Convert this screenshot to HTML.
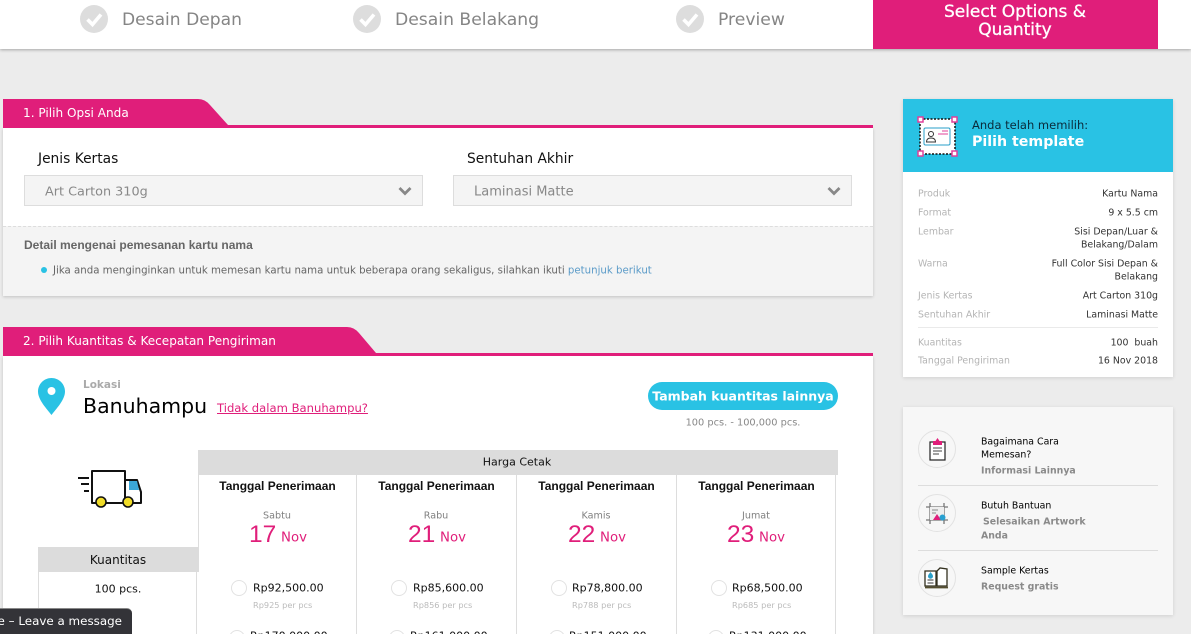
<!DOCTYPE html>
<html style="overflow:hidden;height:634px"><head><meta charset="utf-8"><style>
html,body{margin:0;padding:0}
body{width:1191px;height:634px;overflow:hidden;background:#ececec;font-family:"DejaVu Sans","Liberation Sans",sans-serif;color:#222}
#w{position:relative;width:1191px;height:634px;overflow:hidden;background:#ececec}
.b{position:absolute}
.t{position:absolute;white-space:nowrap;transform:translateY(-50%)}
.c{position:absolute;white-space:nowrap;transform:translate(-50%,-50%)}
.ar{font-family:"Liberation Sans",sans-serif;font-weight:bold}
.l{font-size:9.4px;color:#b4b4b4;left:918px}
.v{font-size:9.4px;color:#333;right:33px;text-align:right}
.day{font-size:9.6px;color:#808080}
.num{font-size:24.5px;color:#e01e7a;font-family:"Liberation Sans",sans-serif}
.mon{font-size:13.3px;color:#e01e7a}
.h{font-family:"Liberation Sans",sans-serif;font-weight:bold;font-size:12px;color:#111}
.p{font-size:11px;color:#111}
.s{font-size:8.2px;color:#bbb}
.r{position:absolute;width:14px;height:14px;border:1px solid #e2e2e2;border-radius:50%;background:#fff}
.ln{position:absolute;width:1px;background:#ddd}
.hc{font-size:9.4px;color:#000}
.hg{font-size:9.4px;color:#8a8a8a;font-weight:bold}
.circ{position:absolute;left:918px;width:36px;height:36px;border:1px solid #e2e2e2;border-radius:50%}
</style></head><body><div id="w">

<!-- header -->
<div class="b" style="left:0;top:0;width:1191px;height:49px;background:#fff;box-shadow:0 1px 3px rgba(0,0,0,.3)"></div>
<div class="b" style="left:873px;top:0;width:285px;height:49px;background:#e01e7a"></div>
<svg class="b" style="left:80px;top:5px" width="28" height="28"><circle cx="14" cy="14" r="14" fill="#ddd"/><path d="M7.500 14.500l5 5 8.500-10" fill="none" stroke="#fff" stroke-width="3.600"/></svg>
<svg class="b" style="left:353px;top:5px" width="28" height="28"><circle cx="14" cy="14" r="14" fill="#ddd"/><path d="M7.500 14.500l5 5 8.500-10" fill="none" stroke="#fff" stroke-width="3.600"/></svg>
<svg class="b" style="left:676px;top:5px" width="28" height="28"><circle cx="14" cy="14" r="14" fill="#ddd"/><path d="M7.500 14.500l5 5 8.500-10" fill="none" stroke="#fff" stroke-width="3.600"/></svg>
<div class="t" style="left:122px;top:20px;font-size:17.100px;color:#858585">Desain Depan</div>
<div class="t" style="left:395px;top:20px;font-size:17.200px;color:#858585">Desain Belakang</div>
<div class="t" style="left:718px;top:20px;font-size:17.200px;color:#858585">Preview</div>
<div class="c" style="left:1015px;top:12px;font-size:17px;color:#fff;-webkit-text-stroke:.3px #fff">Select Options &amp;</div>
<div class="c" style="left:1015px;top:30px;font-size:17px;color:#fff;-webkit-text-stroke:.3px #fff">Quantity</div>

<!-- section 1 -->
<div class="b" style="left:3px;top:128px;width:870px;height:168px;background:#fff;box-shadow:0 1px 3px rgba(0,0,0,.18)"></div>
<svg class="b" style="left:3px;top:99px" width="870" height="29"><path d="M0 0H195Q202 0 207 6L225 26H870V29H0Z" fill="#e01e7a"/></svg>
<div class="t" style="left:23px;top:113px;font-size:12.100px;color:#fff">1. Pilih Opsi Anda</div>
<div class="t" style="left:38px;top:159px;font-size:13.800px;color:#111">Jenis Kertas</div>
<div class="t" style="left:467px;top:159px;font-size:13.800px;color:#111">Sentuhan Akhir</div>
<div class="b" style="left:24px;top:175px;width:397px;height:29px;background:#f4f4f4;border:1px solid #ddd"></div>
<div class="b" style="left:453px;top:175px;width:397px;height:29px;background:#f4f4f4;border:1px solid #ddd"></div>
<div class="t" style="left:45px;top:192px;font-size:12.800px;color:#888">Art Carton 310g</div>
<div class="t" style="left:474px;top:192px;font-size:13px;color:#888">Laminasi Matte</div>
<svg class="b" style="left:398px;top:186px" width="14" height="10"><path d="M1.500 2l5.500 5.500L12.500 2" fill="none" stroke="#888" stroke-width="2.800"/></svg>
<svg class="b" style="left:827px;top:186px" width="14" height="10"><path d="M1.500 2l5.500 5.500L12.500 2" fill="none" stroke="#888" stroke-width="2.800"/></svg>
<div class="b" style="left:3px;top:226px;width:870px;height:70px;background:#f4f4f4;border-top:1px dashed #ddd;box-sizing:border-box"></div>
<div class="t ar" style="left:24px;top:245px;font-size:12px;color:#666">Detail mengenai pemesanan kartu nama</div>
<div class="b" style="left:41px;top:267px;width:6px;height:6px;border-radius:50%;background:#29c2e4"></div>
<div class="t" style="left:53px;top:271px;font-size:10.200px;color:#666">Jika anda menginginkan untuk memesan kartu nama untuk beberapa orang sekaligus, silahkan ikuti <span style="color:#5b9bc8">petunjuk berikut</span></div>

<!-- section 2 -->
<div class="b" style="left:3px;top:356px;width:870px;height:278px;background:#fff;box-shadow:0 1px 3px rgba(0,0,0,.18)"></div>
<svg class="b" style="left:3px;top:327px" width="870" height="29"><path d="M0 0H344Q351 0 356 6L373 26H870V29H0Z" fill="#e01e7a"/></svg>
<div class="t" style="left:23px;top:340.500px;font-size:12.070px;color:#fff">2. Pilih Kuantitas &amp; Kecepatan Pengiriman</div>

<svg class="b" style="left:38px;top:378px" width="27" height="38"><path d="M13.500 0C6 0 0 6 0 13.500 0 22 9 31 13.500 37 18 31 27 22 27 13.500 27 6 21 0 13.500 0Z" fill="#29c2e4"/><circle cx="13.500" cy="13" r="4" fill="#fff"/></svg>
<div class="t" style="left:83px;top:385px;font-size:10.500px;font-weight:bold;color:#aaa">Lokasi</div>
<div class="t" style="left:83px;top:406px;font-size:20.500px;color:#000">Banuhampu</div>
<div class="t" style="left:217px;top:408px;font-size:11.600px;color:#e01e7a;text-decoration:underline">Tidak dalam Banuhampu?</div>
<div class="b" style="left:648px;top:382px;width:190px;height:28px;border-radius:14px;background:#29c2e4"></div>
<div class="c" style="left:743px;top:396px;font-size:12.500px;font-weight:bold;color:#fff">Tambah kuantitas lainnya</div>
<div class="c" style="left:743px;top:423px;font-size:9.800px;color:#888">100 pcs. - 100,000 pcs.</div>

<!-- truck -->
<svg class="b" style="left:76px;top:468px" width="68" height="42">
<path d="M2 10h11M5 16h8M8 23h5" stroke="#111" stroke-width="2" fill="none"/>
<path d="M16 3h33v32H16Z" fill="#fff" stroke="#111" stroke-width="2" stroke-linejoin="round"/>
<path d="M49 12h12l4 12v11H49Z" fill="#fff" stroke="#111" stroke-width="2" stroke-linejoin="round"/>
<path d="M53 13h8l2 9H53Z" fill="#3ba7d8"/>
<circle cx="25" cy="34" r="5" fill="#f0dc28" stroke="#111" stroke-width="1.600"/>
<circle cx="52" cy="34" r="5" fill="#f0dc28" stroke="#111" stroke-width="1.600"/>
</svg>

<!-- table -->
<div class="b" style="left:198px;top:450px;width:640px;height:25px;background:#dcdcdc"></div>
<div class="c" style="left:517px;top:462px;font-size:11px;color:#111">Harga Cetak</div>
<div class="b" style="left:38px;top:547px;width:161px;height:25px;background:#dcdcdc"></div>
<div class="c" style="left:118px;top:560px;font-size:12px;color:#111">Kuantitas</div>
<div class="ln" style="left:38px;top:572px;height:62px"></div>
<div class="ln" style="left:198px;top:475px;height:72px"></div>
<div class="ln" style="left:196px;top:572px;height:62px"></div>
<div class="ln" style="left:356px;top:475px;height:159px"></div>
<div class="ln" style="left:516px;top:475px;height:159px"></div>
<div class="ln" style="left:676px;top:475px;height:159px"></div>
<div class="ln" style="left:835px;top:475px;height:159px"></div>
<div class="c" style="left:118px;top:589px;font-size:11px;color:#111">100 pcs.</div>

<div class="c h" style="left:277.500px;top:485.500px">Tanggal Penerimaan</div>
<div class="c h" style="left:436.500px;top:485.500px">Tanggal Penerimaan</div>
<div class="c h" style="left:596.500px;top:485.500px">Tanggal Penerimaan</div>
<div class="c h" style="left:756.500px;top:485.500px">Tanggal Penerimaan</div>

<div class="c day" style="left:277px;top:516px">Sabtu</div>
<div class="c day" style="left:436px;top:516px">Rabu</div>
<div class="c day" style="left:596px;top:516px">Kamis</div>
<div class="c day" style="left:756px;top:516px">Jumat</div>

<div class="t num" style="left:249px;top:535px">17</div><div class="t mon" style="left:281px;top:538px">Nov</div>
<div class="t num" style="left:408px;top:535px">21</div><div class="t mon" style="left:440px;top:538px">Nov</div>
<div class="t num" style="left:568px;top:535px">22</div><div class="t mon" style="left:600px;top:538px">Nov</div>
<div class="t num" style="left:727px;top:535px">23</div><div class="t mon" style="left:759px;top:538px">Nov</div>

<div class="r" style="left:231px;top:580px"></div><div class="t p" style="left:253px;top:588px">Rp92,500.00</div><div class="t s" style="left:253px;top:605px">Rp925 per pcs</div>
<div class="r" style="left:391px;top:580px"></div><div class="t p" style="left:413px;top:588px">Rp85,600.00</div><div class="t s" style="left:413px;top:605px">Rp856 per pcs</div>
<div class="r" style="left:551px;top:580px"></div><div class="t p" style="left:572px;top:588px">Rp78,800.00</div><div class="t s" style="left:572px;top:605px">Rp788 per pcs</div>
<div class="r" style="left:711px;top:580px"></div><div class="t p" style="left:732px;top:588px">Rp68,500.00</div><div class="t s" style="left:732px;top:605px">Rp685 per pcs</div>

<div class="r" style="left:229px;top:630px"></div><div class="t p" style="left:250px;top:636px">Rp170,000.00</div>
<div class="r" style="left:389px;top:630px"></div><div class="t p" style="left:410px;top:636px">Rp161,000.00</div>
<div class="r" style="left:549px;top:630px"></div><div class="t p" style="left:569px;top:636px">Rp151,000.00</div>
<div class="r" style="left:708px;top:630px"></div><div class="t p" style="left:729px;top:636px">Rp131,000.00</div>

<!-- chat -->
<div class="b" style="left:0;top:608px;width:132px;height:26px;background:#333338;border-top:1px solid #888;box-sizing:border-box;border-radius:0 5px 0 0;overflow:hidden">
<div style="position:absolute;right:10px;top:5px;font-size:11.900px;color:#fff;white-space:nowrap">e – Leave a message</div></div>

<!-- right card -->
<div class="b" style="left:903px;top:99px;width:270px;height:278px;background:#fff;box-shadow:0 1px 4px rgba(0,0,0,.12)"></div>
<div class="b" style="left:903px;top:99px;width:270px;height:73px;background:#29c2e4"></div>
<svg class="b" style="left:917px;top:116px" width="42" height="42">
<rect x="3" y="3" width="35" height="35" fill="#fff" stroke="#111" stroke-width="1.500" stroke-dasharray="2 1.500"/>
<g fill="#fff" stroke="#e0409a" stroke-width="1.500"><rect x="1" y="1" width="5" height="5"/><rect x="35" y="1" width="5" height="5"/><rect x="1" y="35" width="5" height="5"/><rect x="35" y="35" width="5" height="5"/></g>
<rect x="7" y="12" width="26" height="17" rx="1.500" fill="#fff" stroke="#2a9fc8" stroke-width="1"/>
<circle cx="14" cy="18" r="2.500" fill="none" stroke="#333" stroke-width="1"/><path d="M9.500 26c0-3 2-4 4.500-4s4.500 1 4.500 4Z" fill="none" stroke="#333" stroke-width="1"/>
<path d="M25 15h6M21 18h10" stroke="#e0409a" stroke-width="1"/>
</svg>
<div class="t" style="left:972px;top:125px;font-size:11.500px;color:#0a2a3a">Anda telah memilih:</div>
<div class="t" style="left:972px;top:141.500px;font-size:14.200px;font-weight:bold;color:#fff">Pilih template</div>
<div class="t l" style="top:194px">Produk</div><div class="t v" style="top:194px">Kartu Nama</div>
<div class="t l" style="top:213px">Format</div><div class="t v" style="top:213px">9 x 5.5 cm</div>
<div class="t l" style="top:232px">Lembar</div><div class="t v" style="top:232px">Sisi Depan/Luar &amp;</div><div class="t v" style="top:245px">Belakang/Dalam</div>
<div class="t l" style="top:264px">Warna</div><div class="t v" style="top:264px">Full Color Sisi Depan &amp;</div><div class="t v" style="top:277px">Belakang</div>
<div class="t l" style="top:296px">Jenis Kertas</div><div class="t v" style="top:296px">Art Carton 310g</div>
<div class="t l" style="top:315px">Sentuhan Akhir</div><div class="t v" style="top:315px">Laminasi Matte</div>
<div class="b" style="left:918px;top:327px;width:240px;height:1px;background:#eaeaea"></div>
<div class="t l" style="top:343px">Kuantitas</div><div class="t v" style="top:343px">100&nbsp; buah</div>
<div class="t l" style="top:361px">Tanggal Pengiriman</div><div class="t v" style="top:361px">16 Nov 2018</div>

<!-- help card -->
<div class="b" style="left:903px;top:407px;width:270px;height:208px;background:#f7f7f7;box-shadow:0 1px 4px rgba(0,0,0,.12)"></div>
<div class="circ" style="top:430px"></div><div class="circ" style="top:494px"></div><div class="circ" style="top:559px"></div>
<div class="b" style="left:918px;top:485px;width:240px;height:1px;background:#ddd"></div>
<div class="b" style="left:918px;top:550px;width:240px;height:1px;background:#ddd"></div>
<svg class="b" style="left:925px;top:437px" width="24" height="24"><rect x="5" y="5" width="15" height="18" fill="#fff" stroke="#222" stroke-width="1.200"/><path d="M8 4h9v4H8ZM10.500 4l2-3 2 3" fill="#e01e7a"/><path d="M8 11h9M8 14h9M8 17h6" stroke="#444" stroke-width="1"/></svg>
<svg class="b" style="left:925px;top:501px" width="24" height="24"><path d="M5 2v21M19 2v21M1 6h22M1 19h22" stroke="#777" stroke-width="1.300" fill="none"/><rect x="5" y="6" width="14" height="13" fill="#eee"/><path d="M7 9h6M7 12h4" stroke="#888" stroke-width="1"/><path d="M8 19l4-6 4 6Z" fill="#e01e7a"/><circle cx="17.500" cy="16.500" r="3" fill="#29a0d0"/></svg>
<svg class="b" style="left:924px;top:566px" width="26" height="24"><path d="M1 5h11v15H1ZM13 20V5l3-3 7 1v17Z" fill="#fff" stroke="#33301f" stroke-width="1.300"/><path d="M1 21.500h23" stroke="#554f30" stroke-width="1.800"/><path d="M6.500 6c-1.500 2-2.500 3-2.500 4.200a2.500 2.500 0 0 0 5 0C9 9 8 8 6.500 6Z" fill="#2a9fc8"/><path d="M3.500 14h6M3.500 17h6" stroke="#333" stroke-width="1"/></svg>

<div class="t hc" style="left:981px;top:442px">Bagaimana Cara</div>
<div class="t hc" style="left:981px;top:455px">Memesan?</div>
<div class="t hg" style="left:981px;top:471px">Informasi Lainnya</div>
<div class="t hc" style="left:981px;top:506px">Butuh Bantuan</div>
<div class="t hg" style="left:983px;top:522px">Selesaikan Artwork</div>
<div class="t hg" style="left:981px;top:536px">Anda</div>
<div class="t hc" style="left:981px;top:571px">Sample Kertas</div>
<div class="t hg" style="left:981px;top:587px">Request gratis</div>

</div></body></html>
